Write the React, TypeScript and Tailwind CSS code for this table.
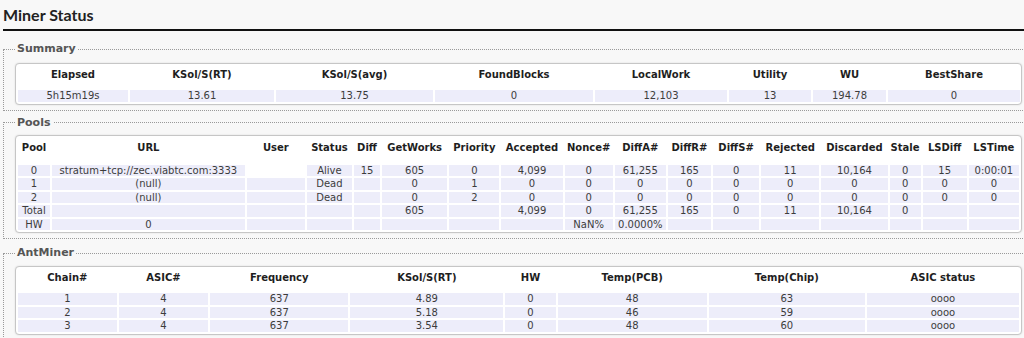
import React from "react";

type Col = { label: string; w: string };

const summaryCols: Col[] = [
  { label: "Elapsed", w: "w-[110px]" },
  { label: "KSol/S(RT)", w: "w-[144px]" },
  { label: "KSol/S(avg)", w: "w-[157px]" },
  { label: "FoundBlocks", w: "w-[158px]" },
  { label: "LocalWork", w: "w-[132px]" },
  { label: "Utility", w: "w-[82px]" },
  { label: "WU", w: "w-[73px]" },
  { label: "BestShare", w: "w-[132px]" },
];
const summaryRows = [["5h15m19s", "13.61", "13.75", "0", "12,103", "13", "194.78", "0"]];

const poolCols: Col[] = [
  { label: "Pool", w: "w-[32px]" },
  { label: "URL", w: "w-[192px]" },
  { label: "User", w: "w-[58px]" },
  { label: "Status", w: "w-[45px]" },
  { label: "Diff", w: "w-[26px]" },
  { label: "GetWorks", w: "w-[65px]" },
  { label: "Priority", w: "w-[50px]" },
  { label: "Accepted", w: "w-[61px]" },
  { label: "Nonce#", w: "w-[48px]" },
  { label: "DiffA#", w: "w-[51px]" },
  { label: "DiffR#", w: "w-[43px]" },
  { label: "DiffS#", w: "w-[46px]" },
  { label: "Rejected", w: "w-[58px]" },
  { label: "Discarded", w: "w-[66px]" },
  { label: "Stale", w: "w-[31px]" },
  { label: "LSDiff", w: "w-[44px]" },
  { label: "LSTime", w: "w-[50px]" },
];
const poolRows = [
  ["0", "stratum+tcp://zec.viabtc.com:3333", "", "Alive", "15", "605", "0", "4,099", "0", "61,255", "165", "0", "11", "10,164", "0", "15", "0:00:01"],
  ["1", "(null)", "", "Dead", "", "0", "1", "0", "0", "0", "0", "0", "0", "0", "0", "0", "0"],
  ["2", "(null)", "", "Dead", "", "0", "2", "0", "0", "0", "0", "0", "0", "0", "0", "0", "0"],
  ["Total", "", "", "", "", "605", "", "4,099", "0", "61,255", "165", "0", "11", "10,164", "0", "", ""],
  ["HW", "0", "", "", "", "", "", "", "NaN%", "0.0000%", "", "", "", "", "", "", ""],
];

const minerCols: Col[] = [
  { label: "Chain#", w: "w-[98px]" },
  { label: "ASIC#", w: "w-[89px]" },
  { label: "Frequency", w: "w-[137px]" },
  { label: "KSol/S(RT)", w: "w-[152px]" },
  { label: "HW", w: "w-[50px]" },
  { label: "Temp(PCB)", w: "w-[148px]" },
  { label: "Temp(Chip)", w: "w-[155px]" },
  { label: "ASIC status", w: "w-[151px]" },
];
const minerRows = [
  ["1", "4", "637", "4.89", "0", "48", "63", "oooo"],
  ["2", "4", "637", "5.18", "0", "46", "59", "oooo"],
  ["3", "4", "637", "3.54", "0", "48", "60", "oooo"],
];

const Section: React.FC<{ title: string; top: string; gap: string; children: React.ReactNode }> = ({ title, top, gap, children }) => (
  <fieldset className={`${top} ml-[3px] w-[1040px] border border-dotted border-[#9a9a9a] pl-[11px] pb-[5px]`}>
    <legend className="px-[2px] text-[11px] leading-[14px] font-bold text-[#555]">{title}</legend>
    <div className={`${gap} w-[1007px] rounded-[4px] border border-[#c6c6c6] bg-white shadow-[0_0_2px_rgba(0,0,0,0.12)]`}>
      {children}
    </div>
  </fieldset>
);

const StatusTable: React.FC<{ cols: Col[]; rows: string[][]; redact?: boolean; head?: string }> = ({
  cols,
  rows,
  redact,
  head = "h-[22px] pt-[2px] pb-[6px]",
}) => (
  <table className="w-full table-fixed border-separate border-spacing-x-[2px] border-spacing-y-[2px] text-[10px] text-[#3c3c3c]">
    <thead>
      <tr>
        {cols.map((c) => (
          <th key={c.label} className={`${c.w} ${head} align-top text-center font-bold leading-[14px] text-[#1e1e1e] whitespace-nowrap`}>
            {c.label}
          </th>
        ))}
      </tr>
    </thead>
    <tbody>
      {rows.map((r, i) => (
        <tr key={i}>
          {r.map((v, j) => (
            <td
              key={j}
              className={`${redact && i === 0 && j === 2 ? "bg-white" : "bg-[#ededfa]"} h-[11.5px] p-0 text-center leading-[11.5px] whitespace-nowrap overflow-hidden`}
            >
              {v}
            </td>
          ))}
        </tr>
      ))}
    </tbody>
  </table>
);

export default function App() {
  return (
    <div className="min-h-screen w-full overflow-hidden bg-[#f8f8f8] font-['DejaVu_Sans',sans-serif]">
      <h2 className="ml-[3px] border-b-2 border-[#111] pt-[5px] pb-[4px] font-['Lato',sans-serif] text-[16px] leading-[20px] font-bold text-[#222]">
        Miner Status
      </h2>
      <div className="flex flex-col">
        <Section title="Summary" top="mt-[11px]" gap="mt-[7px]">
          <StatusTable cols={summaryCols} rows={summaryRows} />
        </Section>
        <Section title="Pools" top="mt-[5px]" gap="mt-[5px]">
          <StatusTable cols={poolCols} rows={poolRows} redact head="h-[25px] pt-[3px] pb-[8px]" />
        </Section>
        <Section title="AntMiner" top="mt-[7px]" gap="mt-[6px]">
          <StatusTable cols={minerCols} rows={minerRows} />
        </Section>
      </div>
    </div>
  );
}
